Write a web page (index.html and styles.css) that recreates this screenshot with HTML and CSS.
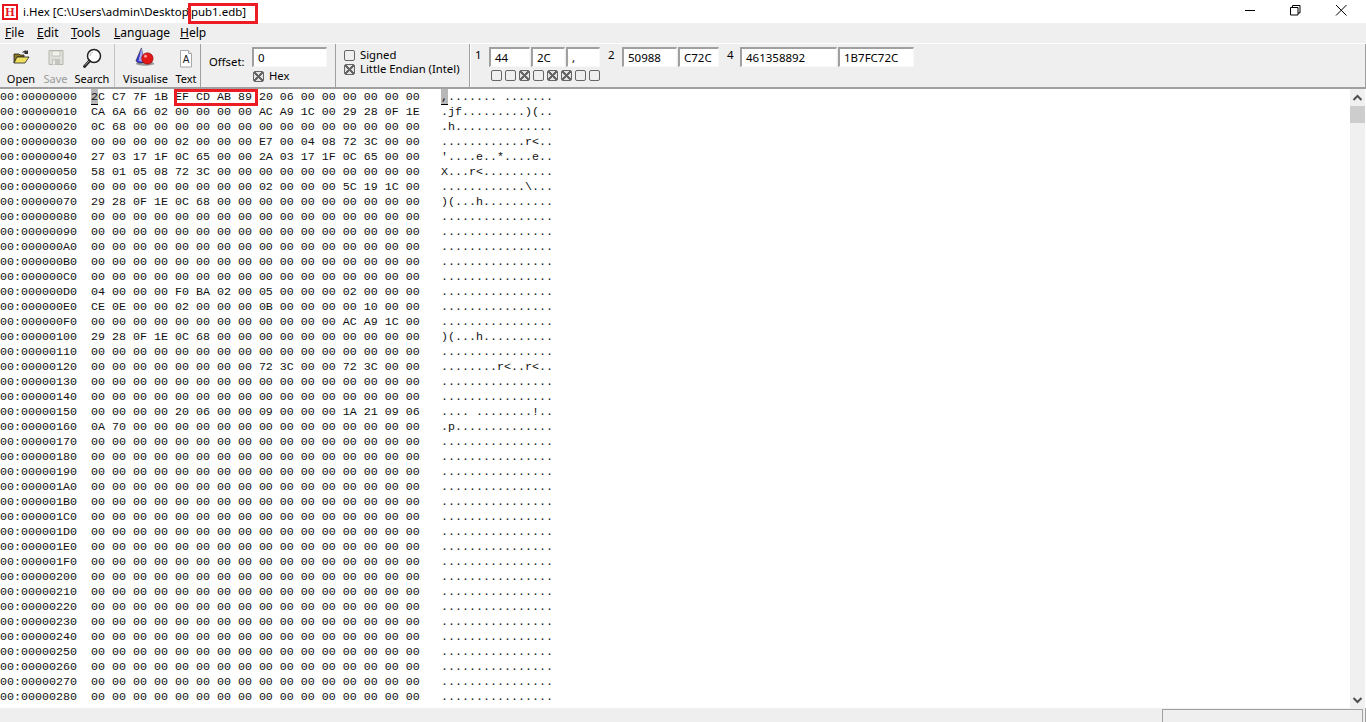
FILE: index.html
```html
<!DOCTYPE html>
<html lang="en">
<head>
<meta charset="utf-8">
<title>i.Hex</title>
<link rel="stylesheet" href="styles.css">
</head>
<body>
<div class="app">
  <header class="titlebar">
    <span class="logo">H</span>
    <span class="title">i.Hex [C:\Users\admin\Desktop<span class="tail">\pub1.edb]</span></span>
    <div class="winbtns">
      <svg class="winbtn" width="46" height="20" viewBox="0 0 46 20"><path d="M18 10.500h10" stroke="#000" fill="none"/></svg>
      <svg class="winbtn" width="46" height="20" viewBox="0 0 46 20"><path d="M18.500 7.500h7.500v7.500h-7.500zM20.500 7.500v-2h7.500v7.500h-2" stroke="#000" fill="none"/></svg>
      <svg class="winbtn" width="46" height="20" viewBox="0 0 46 20"><path d="M18 5l10.500 10.500M28.500 5L18 15.500" stroke="#000" fill="none"/></svg>
    </div>
  </header>
  <nav class="menubar">
    <span class="menu"><u>F</u>ile</span>
    <span class="menu"><u>E</u>dit</span>
    <span class="menu"><u>T</u>ools</span>
    <span class="menu"><u>L</u>anguage</span>
    <span class="menu"><u>H</u>elp</span>
  </nav>
  <section class="toolbar">
    <div class="panel tools-a">
      <div class="tool"><svg width="20" height="20" viewBox="0 -1 20 20"><path d="M3 6h5l1 1h4v2H6L3 15z" fill="#8a7a20" stroke="#222" stroke-width=".8"/><path d="M6 9h12l-4 6H3z" fill="#f0e060" stroke="#222" stroke-width=".8"/><path d="M11 5c1-2 3-3 5-2l1-1v4h-4l1-1c-1-.7-2-.5-3 0z" fill="#333"/></svg><span>Open</span></div>
      <div class="tool off"><svg width="20" height="20" viewBox="0 -1 20 20"><path d="M3 2.500h14v14H3z" fill="#dfe0d8" stroke="#b4b6ae"/><path d="M6 3h8v5H6z" fill="#f2f2ee" stroke="#b4b6ae" stroke-width=".7"/><path d="M6 11h8v5.500H6z" fill="#c4c6be"/><path d="M7 12.500h2v4H7z" fill="#eee"/></svg><span>Save</span></div>
      <div class="tool search"><svg width="22" height="22" viewBox="0 -1 22 22"><circle cx="13" cy="8" r="6.500" fill="#fff" stroke="#222" stroke-width="1.500"/><path d="M12 4a4 4 0 0 0-3 4" stroke="#bbb" fill="none"/><path d="M8.500 13L3.500 18.500" stroke="#222" stroke-width="2.800" stroke-linecap="round"/><path d="M4 17.500l4-4.500" stroke="#999"/></svg><span>Search</span></div>
    </div>
    <div class="panel tools-b">
      <div class="tool vis"><svg width="22" height="22" viewBox="2 0 24 24"><ellipse cx="13" cy="18" rx="10" ry="2.500" fill="#999"/><path d="M9 1L3 15c2 3 6 3 9 1z" fill="#3d3dd8" stroke="#111" stroke-width=".6"/><path d="M9 1L6 15c2 1 4 1 6 1z" fill="#a8a8f0"/><circle cx="15.500" cy="12.500" r="6.300" fill="#e01818" stroke="#600" stroke-width=".5"/><circle cx="13.500" cy="10" r="1.600" fill="#ff9a9a"/></svg><span>Visualise</span></div>
      <div class="tool txt"><svg width="16" height="21" viewBox="0 0 16 21"><path d="M2.500 3.500h8l3 3v13.500h-11z" fill="#fff" stroke="#a8a8a8"/><path d="M10.500 3.500v3h3" fill="#e4e4e4" stroke="#a8a8a8"/><text x="8" y="16" class="doc-a">A</text></svg><span>Text</span></div>
    </div>
    <div class="panel offset">
      <span class="offset-label">Offset:</span>
      <div class="offset-col">
        <span class="field f-offset">0</span>
        <label class="check hex-check"><span class="box on"></span>Hex</label>
      </div>
    </div>
    <div class="panel options">
      <label class="check"><span class="box"></span>Signed</label>
      <label class="check"><span class="box on"></span>Little Endian (Intel)</label>
    </div>
    <div class="panel values">
      <span class="num">1</span>
      <div class="one-col">
        <div class="fields">
          <span class="field f-44">44</span>
          <span class="field f-2c">2C</span>
          <span class="field f-ch">,</span>
        </div>
        <div class="bits">
          <span class="box"></span><span class="box"></span><span class="box on"></span><span class="box"></span><span class="box on"></span><span class="box on"></span><span class="box"></span><span class="box"></span>
        </div>
      </div>
      <span class="num n2">2</span>
      <div class="fields">
        <span class="field f-50">50988</span>
        <span class="field f-c7">C72C</span>
      </div>
      <span class="num n4">4</span>
      <div class="fields">
        <span class="field f-46">461358892</span>
        <span class="field f-1b">1B7FC72C</span>
      </div>
    </div>
  </section>
  <main class="content">
    <div class="dump"><pre class="col addr">00:00000000
00:00000010
00:00000020
00:00000030
00:00000040
00:00000050
00:00000060
00:00000070
00:00000080
00:00000090
00:000000A0
00:000000B0
00:000000C0
00:000000D0
00:000000E0
00:000000F0
00:00000100
00:00000110
00:00000120
00:00000130
00:00000140
00:00000150
00:00000160
00:00000170
00:00000180
00:00000190
00:000001A0
00:000001B0
00:000001C0
00:000001D0
00:000001E0
00:000001F0
00:00000200
00:00000210
00:00000220
00:00000230
00:00000240
00:00000250
00:00000260
00:00000270
00:00000280</pre><pre class="col hex"><span class="cursor">2</span><span>C C7 7F 1B EF CD AB 89 20 06 00 00 00 00 00 00</span><span class="rest">CA 6A 66 02 00 00 00 00 AC A9 1C 00 29 28 0F 1E
0C 68 00 00 00 00 00 00 00 00 00 00 00 00 00 00
00 00 00 00 02 00 00 00 E7 00 04 08 72 3C 00 00
27 03 17 1F 0C 65 00 00 2A 03 17 1F 0C 65 00 00
58 01 05 08 72 3C 00 00 00 00 00 00 00 00 00 00
00 00 00 00 00 00 00 00 02 00 00 00 5C 19 1C 00
29 28 0F 1E 0C 68 00 00 00 00 00 00 00 00 00 00
00 00 00 00 00 00 00 00 00 00 00 00 00 00 00 00
00 00 00 00 00 00 00 00 00 00 00 00 00 00 00 00
00 00 00 00 00 00 00 00 00 00 00 00 00 00 00 00
00 00 00 00 00 00 00 00 00 00 00 00 00 00 00 00
00 00 00 00 00 00 00 00 00 00 00 00 00 00 00 00
04 00 00 00 F0 BA 02 00 05 00 00 00 02 00 00 00
CE 0E 00 00 02 00 00 00 0B 00 00 00 00 10 00 00
00 00 00 00 00 00 00 00 00 00 00 00 AC A9 1C 00
29 28 0F 1E 0C 68 00 00 00 00 00 00 00 00 00 00
00 00 00 00 00 00 00 00 00 00 00 00 00 00 00 00
00 00 00 00 00 00 00 00 72 3C 00 00 72 3C 00 00
00 00 00 00 00 00 00 00 00 00 00 00 00 00 00 00
00 00 00 00 00 00 00 00 00 00 00 00 00 00 00 00
00 00 00 00 20 06 00 00 09 00 00 00 1A 21 09 06
0A 70 00 00 00 00 00 00 00 00 00 00 00 00 00 00
00 00 00 00 00 00 00 00 00 00 00 00 00 00 00 00
00 00 00 00 00 00 00 00 00 00 00 00 00 00 00 00
00 00 00 00 00 00 00 00 00 00 00 00 00 00 00 00
00 00 00 00 00 00 00 00 00 00 00 00 00 00 00 00
00 00 00 00 00 00 00 00 00 00 00 00 00 00 00 00
00 00 00 00 00 00 00 00 00 00 00 00 00 00 00 00
00 00 00 00 00 00 00 00 00 00 00 00 00 00 00 00
00 00 00 00 00 00 00 00 00 00 00 00 00 00 00 00
00 00 00 00 00 00 00 00 00 00 00 00 00 00 00 00
00 00 00 00 00 00 00 00 00 00 00 00 00 00 00 00
00 00 00 00 00 00 00 00 00 00 00 00 00 00 00 00
00 00 00 00 00 00 00 00 00 00 00 00 00 00 00 00
00 00 00 00 00 00 00 00 00 00 00 00 00 00 00 00
00 00 00 00 00 00 00 00 00 00 00 00 00 00 00 00
00 00 00 00 00 00 00 00 00 00 00 00 00 00 00 00
00 00 00 00 00 00 00 00 00 00 00 00 00 00 00 00
00 00 00 00 00 00 00 00 00 00 00 00 00 00 00 00
00 00 00 00 00 00 00 00 00 00 00 00 00 00 00 00</span></pre><pre class="col ascii"><span class="cursor">,</span><span>....... .......</span><span class="rest">.jf.........)(..
.h..............
............r&lt;..
'....e..*....e..
X...r&lt;..........
............\...
)(...h..........
................
................
................
................
................
................
................
................
)(...h..........
................
........r&lt;..r&lt;..
................
................
.... ........!..
.p..............
................
................
................
................
................
................
................
................
................
................
................
................
................
................
................
................
................
................</span></pre></div>
    <aside class="scrollbar">
      <svg width="15" height="17" viewBox="0 0 15 17"><path d="M3.500 11l4-4 4 4" stroke="#505050" stroke-width="2" fill="none"/></svg>
      <div class="thumb"></div>
      <div class="track"></div>
      <svg width="15" height="17" viewBox="0 0 15 17"><path d="M3.500 7l4 4 4-4" stroke="#505050" stroke-width="2" fill="none"/></svg>
    </aside>
  </main>
  <footer class="statusbar"><div class="status-panel"></div></footer>
  <div class="mark mark-title"></div>
  <div class="mark mark-hex"></div>
</div>
</body>
</html>
```
FILE: styles.css
```css
* { box-sizing: border-box; }
html, body { margin: 0; padding: 0; }
body {
  width: 1366px;
  height: 722px;
  overflow: hidden;
  background: #fff;
  color: #000;
  font-family: "Noto Sans", "Liberation Sans", sans-serif;
  font-size: 12px;
}
.app { position: relative; width: 1366px; height: 722px; display: flex; flex-direction: column; }

.titlebar { height: 23px; flex: none; display: flex; align-items: center; padding-left: 2px; background: #fff; }
.logo {
  width: 16px; height: 16px; border: 2px solid #e8141c; color: #e8141c; background: #fff;
  font: bold 12px/12px "Liberation Serif", serif; text-align: center;
}
.title { margin-left: 5px; font-size: 11.450px; }
.tail { margin-left: -2px; }
.winbtns { margin-left: auto; display: flex; padding-right: 2px; margin-top: -3px; }
.winbtn { display: block; }
.winbtn:first-child { margin-right: -1px; }

.menubar { height: 21px; flex: none; display: flex; align-items: center; padding-left: 5px; background: #efefef; border-bottom: 1px solid #fff; }
.menu { font-size: 12px; line-height: 18px; }
.menu:nth-child(1) { width: 32px; }
.menu:nth-child(2) { width: 34px; }
.menu:nth-child(3) { width: 43px; }
.menu:nth-child(4) { width: 66px; }

.toolbar { height: 45px; flex: none; display: flex; background: #efefef; border-bottom: 2px solid #a0a0a0; border-right: 1px solid #a0a0a0; }
.panel { height: 43px; flex: none; border-right: 1px solid #a0a0a0; }
.tools-a { width: 115px; display: flex; padding: 3px 0 0 3px; border-right: 1px solid #c4c4c4; }
.tools-b { width: 86px; display: flex; padding: 3px 0 0 0; }
.tool { display: flex; flex-direction: column; align-items: center; width: 36px; height: 39px; justify-content: space-between; font-size: 11px; line-height: 14px; }
.tool svg { display: block; flex: none; }
.tool span { display: block; white-space: nowrap; }
.tool.off { color: #9a9a9a; width: 33px; }
.tool.search { width: 40px; }
.tool.vis { width: 57px; margin-left: 2px; }
.tool.txt { width: 24px; }
.doc-a { font: 10px "Liberation Sans", sans-serif; text-anchor: middle; fill: #222; }

.field {
  display: block; height: 20px; padding: 0 0 0 4px; background: #fff;
  border-top: 2px solid #a0a0a0; border-left: 2px solid #a0a0a0; border-right: 1px solid #f8f8f8; border-bottom: 1px solid #f8f8f8;
  font-size: 11.500px; line-height: 18px;
}
.offset { width: 135px; display: flex; padding: 3px 0 0 8px; }
.offset-label { font-size: 11.300px; margin-top: 7px; width: 43px; }
.offset-col { display: flex; flex-direction: column; }
.f-offset { width: 75px; }
.check { display: flex; align-items: center; gap: 5px; font-size: 11.300px; line-height: 14px; }
.box { display: block; flex: none; width: 11px; height: 11px; border: 1px solid #666; border-radius: 2px; background: #efefef; }
.box.on { background: linear-gradient(45deg, transparent 44%, #666 44%, #666 56%, transparent 56%), linear-gradient(-45deg, transparent 44%, #666 44%, #666 56%, transparent 56%), #e4e4e4; }
.hex-check { margin: 2px 0 0 1px; }
.options { width: 134px; padding: 4px 0 0 8px; display: flex; flex-direction: column; }
.values { flex: 1; border-right: 0; display: flex; align-items: flex-start; padding-top: 3px; border-left: 1px solid #fff; }
.num { margin: 0 0 0 4px; width: 14px; font-size: 11.500px; line-height: 16px; }
.n2 { margin-left: 8px; }
.n4 { margin-left: 8px; width: 13px; }
.fields { display: flex; gap: 1px; }
.f-44 { width: 41px; } .f-2c { width: 34px; } .f-ch { width: 34px; }
.f-50 { width: 55px; } .f-c7 { width: 41px; }
.f-46 { width: 97px; } .f-1b { width: 76px; }
.bits { display: flex; gap: 3px; margin: 3px 0 0 2px; }

.content { height: 619px; flex: none; display: flex; background: #fff; overflow: hidden; }
.dump { flex: 1; display: flex; padding: 1px 0 0 0; overflow: hidden; }
.col { margin: 0; font: 11.670px/15px "Liberation Mono", monospace; color: #111; }
.addr { width: 91px; }
.hex { width: 350px; }
.rest { display: block; }
.cursor { background: #b8b8b8; border-bottom: 1px solid #000; padding: 1px 0 0; }
.scrollbar { width: 15px; flex: none; margin-right: 1px; background: #f0f0f0; display: flex; flex-direction: column; }
.scrollbar svg { display: block; flex: none; }
.thumb { height: 17px; flex: none; background: #cdcdcd; }
.track { flex: 1; }

.statusbar { flex: 1; background: #efefef; padding: 1px 2px 0 1162px; border-right: 1px solid #a0a0a0; }
.status-panel { height: 100%; border-top: 1px solid #a0a0a0; border-left: 1px solid #a0a0a0; border-right: 1px solid #a0a0a0; }

.mark { position: absolute; border: 3px solid #ed1c24; pointer-events: none; }
.mark-title { left: 188px; top: 3px; width: 70px; height: 21px; }
.mark-hex { left: 174px; top: 89px; width: 84px; height: 17px; }
```
